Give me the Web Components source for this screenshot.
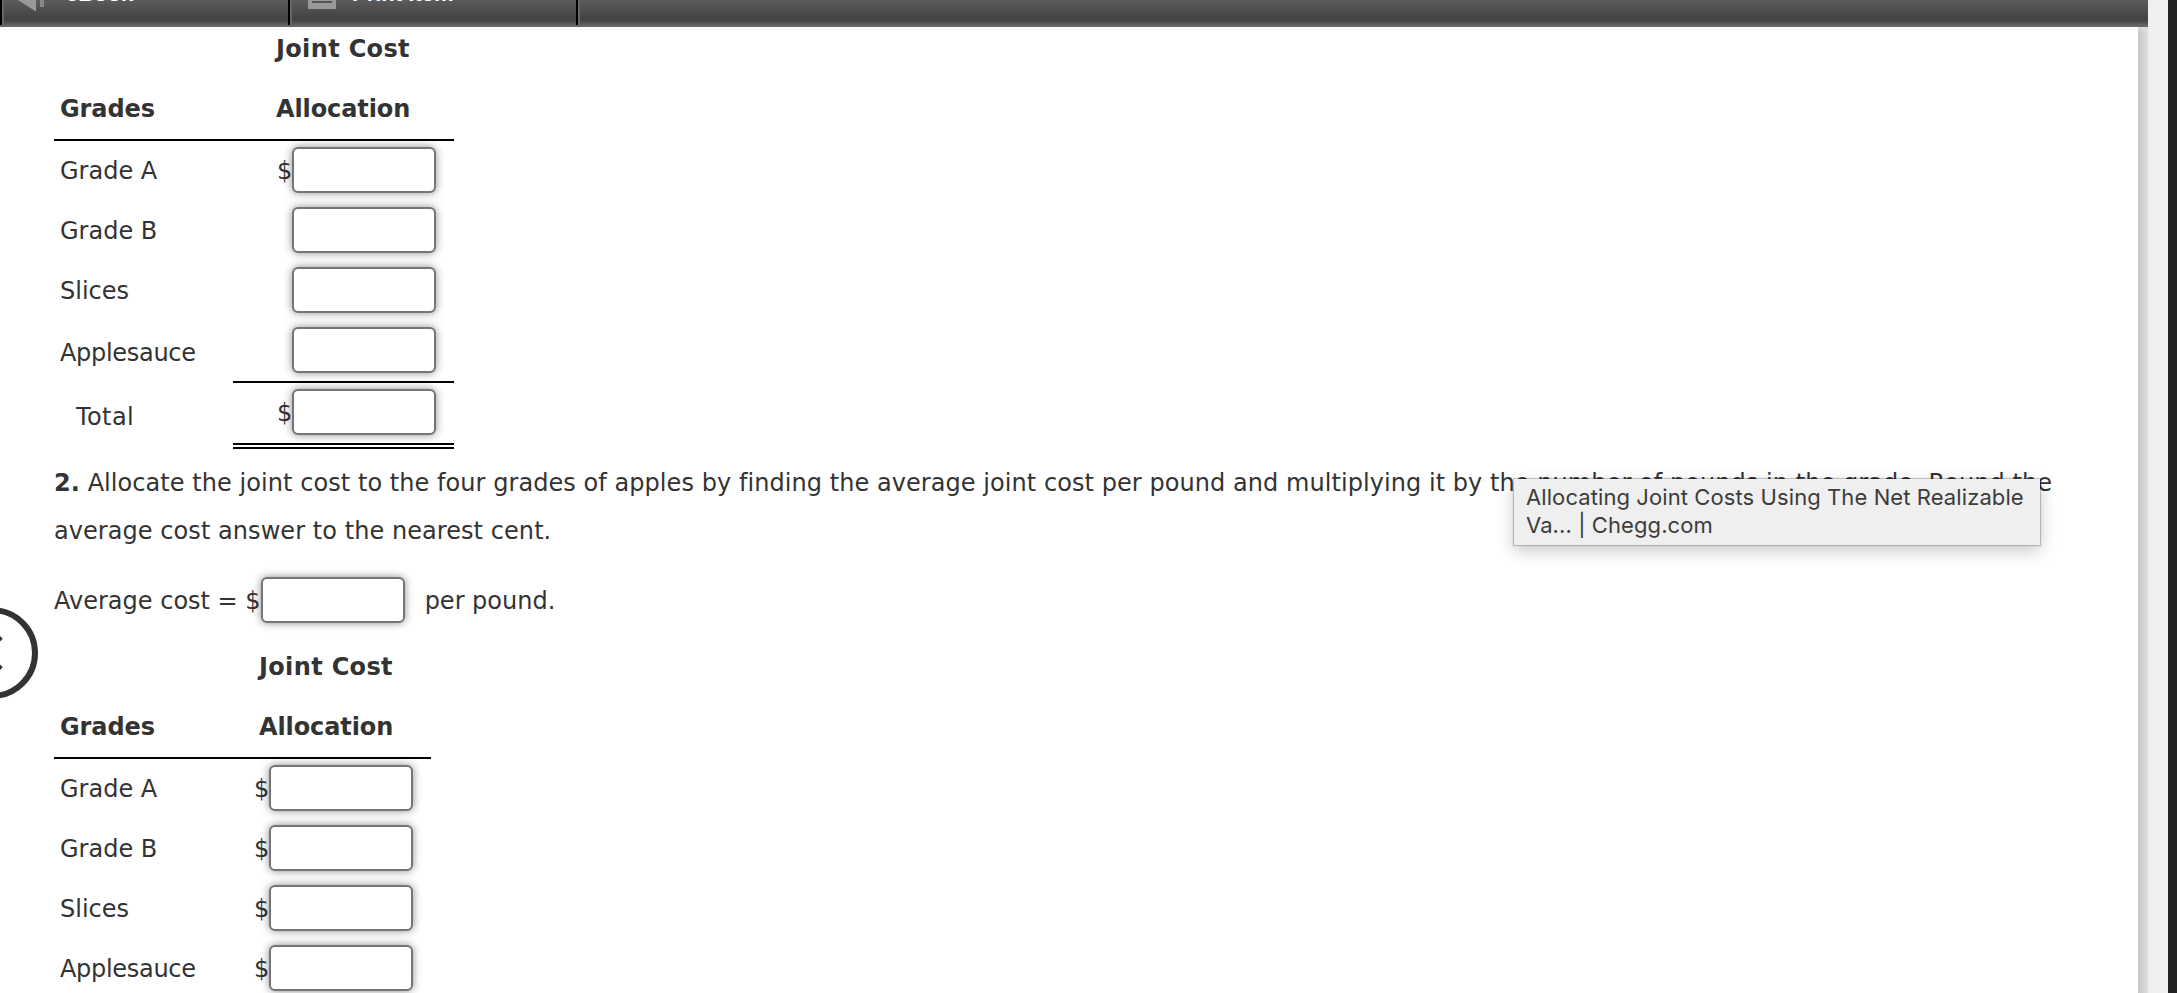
<!DOCTYPE html>
<html lang="en">
<head>
<meta charset="utf-8">
<title>Joint Cost Allocation</title>
<style>
  body {
    margin: 0;
    width: 2177px;
    height: 993px;
    overflow: hidden;
    background: #fff;
    color: #333;
    font-family: "DejaVu Sans", Verdana, sans-serif;
    font-size: 24px;
    font-variant-ligatures: none;
  }
</style>
</head>
<body>
<assignment-page>
  <tool-bar slot="toolbar">
    <tool-button style="--gap: 18px">
      <svg slot="icon" width="30" height="13" viewBox="0 0 30 13"><path d="M0 0H18V11.500L14 9Z" fill="#999"/><path d="M22 0h4v7h-4z" fill="#888"/></svg>
      eBook
    </tool-button>
    <tool-button style="--gap: 16px">
      <svg slot="icon" width="30" height="13" viewBox="0 0 30 13"><path d="M2 0h28v9H2z" fill="#999"/><path d="M6 1h20v2H6z" fill="#555"/></svg>
      Print Item
    </tool-button>
  </tool-bar>

  <allocation-table style="--label: 179px; --pad: 59px; --head: 43px; --width: 400px">
    <allocation-row currency>Grade A</allocation-row>
    <allocation-row>Grade B</allocation-row>
    <allocation-row>Slices</allocation-row>
    <allocation-row last style="--spacing: -.3px">Applesauce</allocation-row>
    <allocation-row total currency style="--spacing: .4px">Total</allocation-row>
  </allocation-table>

  <question-text><b>2.</b> Allocate the joint cost to the four grades of apples by finding the average joint cost per pound and multiplying it by the number of pounds in the grade. Round the average cost answer to the nearest cent.</question-text>

  <average-cost>Average cost = $<span slot="after">per pound.</span></average-cost>

  <allocation-table style="--label: 179px; --pad: 36px; --head: 26px; --width: 377px">
    <allocation-row currency>Grade A</allocation-row>
    <allocation-row currency>Grade B</allocation-row>
    <allocation-row currency>Slices</allocation-row>
    <allocation-row currency style="--spacing: -.3px">Applesauce</allocation-row>
  </allocation-table>

  <previous-button slot="overlay"></previous-button>
  <link-tooltip slot="overlay">Allocating Joint Costs Using The Net Realizable<br>Va... | Chegg.com</link-tooltip>
</assignment-page>

<script>
class BaseElement extends HTMLElement {
  constructor() {
    super();
    this.attachShadow({ mode: 'open' });
  }

  connectedCallback() {
    this.shadowRoot.innerHTML = this.render();
  }
}

class AssignmentPage extends BaseElement {
  render() {
    return `
      <style>
        :host { display: grid; grid-template-columns: 2138px 10px 20px 9px; grid-template-rows: 27px 966px; position: relative; height: 993px; overflow: hidden; }
        .top { grid-column: 1 / 3; }
        main { display: flex; flex-direction: column; align-items: flex-start; padding-left: 54px; overflow: hidden; }
        .shade { background: linear-gradient(to right, #c4c4c4, #e0e0e0); box-shadow: inset 0 6px 6px -4px #e4e4e4; }
        .scroll { grid-column: 3; grid-row: 1 / 3; background: #efefef; }
        .edge { grid-column: 4; grid-row: 1 / 3; background: #222; }
      </style>
      <div class="top"><slot name="toolbar"></slot></div>
      <main><slot></slot></main>
      <div class="shade"></div>
      <div class="scroll"></div>
      <div class="edge"></div>
      <slot name="overlay"></slot>
    `;
  }
}

class ToolBar extends BaseElement {
  render() {
    return `
      <style>
        :host { display: flex; height: 27px; overflow: hidden;
          background: linear-gradient(#5c5c5c 0, #444 17px, #464646 21px, #696969 26px, #696969 27px); }
        .end { width: 2px; height: 25px; background: #000; border-right: 2px solid #666; }
      </style>
      <slot></slot><div class="end"></div>
    `;
  }
}

class ToolButton extends BaseElement {
  render() {
    return `
      <style>
        :host { display: flex; width: 288px; height: 25px; box-sizing: border-box; border-left: 2px solid #000;
          padding-left: 16px; gap: var(--gap); color: #fff; font: bold 22px "Liberation Sans", Arial, sans-serif;
          white-space: nowrap; box-shadow: inset 2px 0 #666; }
        .label { margin-top: -17px; line-height: 22px; height: 22px; }
      </style>
      <slot name="icon"></slot><div class="label"><slot></slot></div>
    `;
  }
}

class AnswerBox extends BaseElement {
  render() {
    return `
      <style>
        :host { display: inline-block; }
        input { display: block; box-sizing: border-box; width: 144px; height: 46px; margin: 0; padding: 0 8px;
          border: 2px solid #757575; border-radius: 6px; background: #fff; box-shadow: 0 0 8px rgba(0, 0, 0, .45); font: inherit; }
      </style>
      <input type="text">
    `;
  }
}

class AllocationTable extends BaseElement {
  render() {
    return `
      <style>
        :host { display: block; width: var(--width); }
        header { display: grid; grid-template-columns: var(--label) 1fr; box-sizing: border-box; height: 114px;
          padding: 0 0 0 6px; border-bottom: 2px solid #000; font-weight: bold; line-height: 60px; }
        header div { height: 112px; margin-top: -8px; }
        .grades { padding-top: 60px; letter-spacing: -.1px; }
        .cost { padding-left: calc(var(--head) - 6px); letter-spacing: -.1px; }
        .first { letter-spacing: .35px; }
      </style>
      <header>
        <div class="grades">Grades</div>
        <div class="cost"><span class="first">Joint Cost</span><br>Allocation</div>
      </header>
      <slot></slot>
    `;
  }
}

class AllocationRow extends BaseElement {
  render() {
    return `
      <style>
        :host { display: grid; grid-template-columns: var(--label) 1fr; grid-template-rows: 100%; height: 60px; }
        .label { padding-left: 6px; line-height: 60px; letter-spacing: var(--spacing, 0); }
        .cell { display: flex; box-sizing: border-box; padding: 6px 0 0 var(--pad); }
        .sign { width: 15px; margin-left: -15px; line-height: 49px; }
        :host([last]) { height: 62px; }
        :host([last]) .label { line-height: 64px; }
        :host([last]) .cell { border-bottom: 2px solid #000; }
        :host([total]) { height: 66px; }
        :host([total]) .label { padding-left: 22px; line-height: 68px; }
        :host([total]) .cell { border-bottom: 6px double #000; }
      </style>
      <div class="label"><slot></slot></div>
      <div class="cell">${this.hasAttribute('currency') ? '<span class="sign">$</span>' : ''}<answer-box></answer-box></div>
    `;
  }
}

class QuestionText extends BaseElement {
  render() {
    return `
      <style>
        :host { display: block; width: 2030px; line-height: 48px; margin-top: 10px; letter-spacing: .06px; }
      </style>
      <slot></slot>
    `;
  }
}

class AverageCost extends BaseElement {
  render() {
    return `
      <style>
        :host { display: flex; height: 46px; line-height: 48px; margin: 22px 0; white-space: nowrap; }
        .after { margin-left: 20px; }
      </style>
      <slot></slot><answer-box></answer-box><div class="after"><slot name="after"></slot></div>
    `;
  }
}

class PreviousButton extends BaseElement {
  render() {
    return `
      <style>
        :host { display: block; position: absolute; left: -54px; top: 607px; width: 92px; height: 92px; }
      </style>
      <svg width="92" height="92" viewBox="0 0 92 92" fill="none" stroke="#333">
        <circle cx="46" cy="46" r="43" fill="#fff" stroke-width="6"/>
        <path d="M55 30 39 46 55 62" stroke-width="5"/>
      </svg>
    `;
  }
}

class LinkTooltip extends BaseElement {
  render() {
    return `
      <style>
        :host { display: block; position: absolute; left: 1514px; top: 479px; width: 526px; height: 66px; box-sizing: border-box;
          padding: 4px 0 0 12px; background: #efefef; color: #3c3c3c; font: 22px/28px Inter, sans-serif; letter-spacing: .09px;
          white-space: nowrap; box-shadow: 0 0 1px 1px rgba(0, 0, 0, .2), 0 6px 16px rgba(0, 0, 0, .22); }
      </style>
      <slot></slot>
    `;
  }
}

customElements.define('assignment-page', AssignmentPage);
customElements.define('tool-bar', ToolBar);
customElements.define('tool-button', ToolButton);
customElements.define('answer-box', AnswerBox);
customElements.define('allocation-table', AllocationTable);
customElements.define('allocation-row', AllocationRow);
customElements.define('question-text', QuestionText);
customElements.define('average-cost', AverageCost);
customElements.define('previous-button', PreviousButton);
customElements.define('link-tooltip', LinkTooltip);
</script>
</body>
</html>
